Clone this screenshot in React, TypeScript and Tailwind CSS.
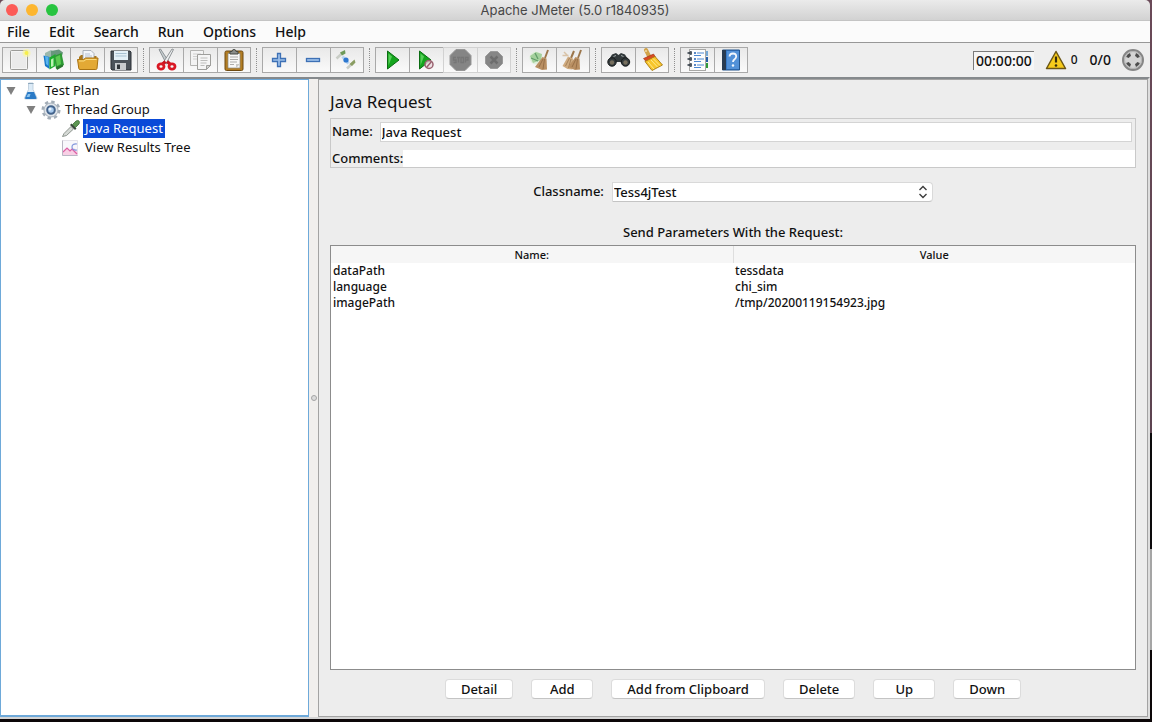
import type { ReactNode } from "react";
import clsx from "clsx";

type Tool = { label: string; icon: ReactNode; disabled?: boolean };

function Icon({ children }: { children: ReactNode }) {
  return (
    <svg viewBox="0 0 24 24" className="size-6 shrink-0" fill="none" aria-hidden="true">
      {children}
    </svg>
  );
}

const sparkle = (
  <>
    <circle cx="18.500" cy="5" r="4" fill="#fbf7a0" opacity=".7" />
    <circle cx="18.500" cy="5" r="2" fill="#f7ef4a" />
  </>
);

const newIcon = (
  <Icon>
    <rect x="2.5" y="2.5" width="17" height="19" rx="1" fill="#f4f4f3" stroke="#9c9c98" />
    <rect x="4" y="4" width="14" height="16" fill="#ebebea" />
    {sparkle}
  </Icon>
);

const templatesIcon = (
  <Icon>
    <path d="M3 5l6-3 4 2v12l-5 2-5-3z" fill="#9bb8ac" />
    <path d="M9 3l8-1.500 4 3-3 10-9 2z" fill="#68977c" />
    <path d="M1.500 7.500l6 1.500v12l-4.500-3z" fill="#1677c8" />
    <path d="M3 8l3.500 1v9L4 16z" fill="#58b4ee" />
    <path d="M7.500 9.500l6-3.500v12l-6 3.500z" fill="#1cae2c" />
    <path d="M12 8l7.500-3 2.500 12-8 4z" fill="#2e9a35" />
    <path d="M13.500 9l4.500-2 1 9-4 2z" fill="#5ccb50" />
    <path d="M9 11.500l2.500-1.500v8L9 19z" fill="#baf3b0" />
    <path d="M14 19l7-2.500v2L15 22z" fill="#26752b" />
  </Icon>
);

const openIcon = (
  <Icon>
    <path d="M3 9l2-2h3l1 1h11.500v8H3z" fill="#a9761c" />
    <path d="M7 2.500h8l3 3V14H7z" fill="#f2f5fa" stroke="#9aa2ad" strokeWidth=".8" />
    <path d="M9 6h5M9 8h7M9 10h7" stroke="#b5c1d4" />
    <path d="M1.500 11.500h6l2-1.500h12.500l-1 10.500q-.2 1-1.200 1H4q-1 0-1.200-1z" fill="#e3a935" stroke="#a97313" />
    <path d="M3 13h5l2-1.500h10.500" stroke="#f9dc83" />
  </Icon>
);

const saveIcon = (
  <Icon>
    <path d="M2 3h19l1 1v18H3l-1-1z" fill="#4b535b" stroke="#2c3137" />
    <rect x="5" y="3" width="14" height="9" fill="#e4f0f8" />
    <path d="M6.500 5.500h11M6.500 8h11" stroke="#a8c1d2" />
    <rect x="6" y="15" width="11" height="7" fill="#c8ccd0" />
    <rect x="8" y="16.500" width="3" height="4.500" fill="#30353a" />
  </Icon>
);

const cutIcon = (
  <Icon>
    <path d="M4 1.500l1.500-.5 8.500 13-2.500 2z" fill="#c6ced1" stroke="#83898c" strokeWidth=".9" />
    <path d="M18.500 1.500L17 1 8.500 14l2.500 2z" fill="#eef0f1" stroke="#83898c" strokeWidth=".9" />
    <path d="M10.500 13.500l-3 2.500M12 13.500l3 2.500" stroke="#c9141f" strokeWidth="3" />
    <ellipse cx="6" cy="18.500" rx="3" ry="2.600" stroke="#d91824" strokeWidth="2.800" />
    <ellipse cx="17" cy="18.500" rx="3" ry="2.600" stroke="#d91824" strokeWidth="2.800" />
  </Icon>
);

const copyIcon = (
  <Icon>
    <path d="M1.500 2.500h13v15h-13z" fill="#f3f3f3" stroke="#b4b4b2" />
    <path d="M4 6h8M4 8.500h4M4 11h4" stroke="#cfcfce" />
    <path d="M8.500 6.500h13v11l-4 4h-9z" fill="#f5f5f5" stroke="#9e9e9b" />
    <path d="M11.500 10h7M11.500 12.500h7M11.500 15h6M11.500 17.500h4" stroke="#bdbdbb" />
    <path d="M17.500 21.500v-4h4z" fill="#d3d3d1" stroke="#9e9e9b" />
  </Icon>
);

const pasteIcon = (
  <Icon>
    <rect x="3" y="3" width="18" height="19.500" rx="1.500" fill="#b27d23" stroke="#6f4a10" />
    <path d="M6 5.500h12v14.500H6z" fill="#f8f8f6" stroke="#8d8c85" strokeWidth=".7" />
    <path d="M8 9h8M8 11.500h8M8 14h7M8 16.500h4" stroke="#adadaa" />
    <path d="M14 20v-4h4z" fill="#c9c9c5" />
    <path d="M8 3.500h2q0-2 2-2t2 2h2V6H8z" fill="#8b8e8a" stroke="#454843" />
  </Icon>
);

const plusIcon = (
  <Icon>
    <path d="M9.500 5.500h3v5h5v3h-5v5h-3v-5h-5v-3h5z" fill="#9dc0ea" stroke="#3d70b5" strokeWidth="1.300" />
  </Icon>
);

const minusIcon = (
  <Icon>
    <rect x="4.500" y="10.500" width="13" height="3" fill="#9dc0ea" stroke="#3d70b5" strokeWidth="1.300" />
  </Icon>
);

const toggleIcon = (
  <Icon>
    <path d="M1.500 10.500L8 4.500" stroke="#c9cdc6" strokeWidth="2.500" />
    <path d="M5 4.500L10 2l.5 3.500-3.500 2z" fill="#6e9a58" />
    <path d="M12 20.500l6.500-6" stroke="#c9cdc6" strokeWidth="2.500" />
    <path d="M14.500 16L19.500 11.500l1 3-3.500 3.500z" fill="#8a9d62" />
    <path d="M7.500 8.500l6 7" stroke="#b5d3f2" strokeWidth="3" />
    <circle cx="11" cy="12" r="2.600" fill="#2e78cf" />
  </Icon>
);

const startIcon = (
  <Icon>
    <path d="M6.500 3L18 12 6.500 21z" fill="#14a51d" stroke="#0a6c12" />
    <path d="M7.500 5.500l3.500 3-3.500 9z" fill="#57cf59" />
  </Icon>
);

const startNoPauseIcon = (
  <Icon>
    <path d="M4.500 3L16 12 4.500 21z" fill="#14a51d" stroke="#0a6c12" />
    <path d="M5.500 5.500l3.500 3-3.500 9z" fill="#57cf59" />
    <circle cx="14" cy="16.500" r="4" fill="#ecdce0" fillOpacity=".8" stroke="#99616f" strokeWidth="1.500" />
    <path d="M11.500 19.500l5-6" stroke="#99616f" strokeWidth="1.500" />
  </Icon>
);

const stopIcon = (
  <Icon>
    <path d="M7 1.500h9l6 6v9l-6 6H7l-6-6v-9z" fill="#858585" stroke="#979797" />
    <path
      d="M7 9.500H4.500V12H7v2.500H4.500M8 9.500h3M9.500 9.500v5M12 9.500h2.500v5H12zM16.500 14.500v-5H19v2.500h-2.500"
      stroke="#767676"
      strokeWidth="1.300"
    />
  </Icon>
);

const shutdownIcon = (
  <Icon>
    <path d="M8.500 3.500h7l5 5v7l-5 5h-7l-5-5v-7z" fill="#868686" stroke="#9a9a9a" />
    <path d="M8.500 8.500l7 7M15.500 8.500l-7 7" stroke="#6d6d6d" strokeWidth="2.500" />
  </Icon>
);

const broom = (
  <>
    <path d="M20 2l-3 8" stroke="#9c764b" strokeWidth="2" />
    <path d="M14.500 9l4 1.500.5 11-5 .5-7-3z" fill="#b98f62" />
    <path d="M15 11l-4 8M16.500 11l-1.500 10" stroke="#8e6741" strokeWidth=".8" />
  </>
);

const clearIcon = (
  <Icon>
    <circle cx="8" cy="10" r="6.500" fill="#e0eedc" />
    <path d="M2 8l6-4 6 2-1 6-8 3z" fill="#a4d09c" />
    <path d="M3 10l7 3M7 5l3 6" stroke="#619d69" strokeWidth="1.300" />
    {broom}
  </Icon>
);

const clearAllIcon = (
  <Icon>
    <path d="M13 3l-3 7" stroke="#9c764b" strokeWidth="2" />
    <path d="M7 8.500l5 2-.5 11-5-.5-5-3z" fill="#cfab80" />
    <path d="M8.500 10l-4 8M10 11l-2.500 9" stroke="#9a764f" strokeWidth=".8" />
    <path d="M1.500 7.500h6M3 4l4 4" stroke="#d8c2a7" strokeWidth="1.500" />
    {broom}
  </Icon>
);

const searchIcon = (
  <Icon>
    <path d="M5 6.500l4-1.500 2.500 2L14 5l4 1.500 4 6.500-5 5-3.500-4h-4L6 18l-5-5z" fill="#31383a" />
    <circle cx="5" cy="14" r="4.200" fill="#333a3c" stroke="#171a1b" />
    <circle cx="18.500" cy="14" r="4.200" fill="#333a3c" stroke="#171a1b" />
    <circle cx="5" cy="14.500" r="2.200" fill="#776f5e" />
    <circle cx="18.500" cy="14.500" r="2.200" fill="#776f5e" />
    <path d="M6.500 8.500l2.500-1M14 7.500l2.500 1" stroke="#a2abac" />
  </Icon>
);

const resetIcon = (
  <Icon>
    <path d="M6 2l3 6" stroke="#d2a44c" strokeWidth="4" strokeLinecap="round" />
    <circle cx="6" cy="3" r="1" fill="#f1dda5" />
    <path d="M3.500 10.500l10-4.500 2 3-9 5z" fill="#d84a22" stroke="#9b2d12" strokeWidth=".6" />
    <path d="M5 13.500L15 8.500 22.500 17 12 22.500z" fill="#f7c52b" stroke="#a87911" strokeWidth=".9" />
    <path d="M8 14l6 7M11 12l6.500 7M13 10.500l7 7" stroke="#ffe98b" />
  </Icon>
);

const helperIcon = (
  <Icon>
    <rect x="3.500" y="1.500" width="16" height="21" fill="#fdfdfd" stroke="#a8a8a6" />
    <path d="M8 5h2M8 11h2M8 17h2" stroke="#2463b4" strokeWidth="1.500" />
    <path d="M11 5h7M11 11h7M11 17h7M8 7.500h7M8 13.500h7M8 19.500h7" stroke="#4c88d2" />
    <path d="M1.500 5h4M1.500 11h4M1.500 17h4" stroke="#27313b" strokeWidth="1.500" />
    <path d="M4 3.500h1.500v3H4zM4 9.500h1.500v3H4zM4 15.500h1.500v3H4z" stroke="#39424c" strokeWidth=".8" />
    <path d="M20 3h2v5h-2z" fill="#75a9d8" />
    <path d="M20 9h2v5h-2z" fill="#275ea8" />
    <path d="M20 15h2v5h-2z" fill="#2f9a39" />
  </Icon>
);

const helpIcon = (
  <Icon>
    <path d="M3.500 2h17v20h-17z" fill="#3679c7" stroke="#22548d" />
    <path d="M3 2h4v20H3z" fill="#293c52" />
    <path d="M8 3h12v18H8z" fill="#5291d8" />
    <path d="M10.500 8.500q.2-3 3.500-3t3.200 3q0 1.500-1.600 2.700T14 14" stroke="#f2f7fd" strokeWidth="1.800" />
    <circle cx="14" cy="17.500" r="1.200" fill="#f2f7fd" />
  </Icon>
);

const toolGroups: Tool[][] = [
  [
    { label: "New", icon: newIcon },
    { label: "Templates", icon: templatesIcon },
    { label: "Open", icon: openIcon },
    { label: "Save", icon: saveIcon },
  ],
  [
    { label: "Cut", icon: cutIcon },
    { label: "Copy", icon: copyIcon },
    { label: "Paste", icon: pasteIcon },
  ],
  [
    { label: "Expand All", icon: plusIcon },
    { label: "Collapse All", icon: minusIcon },
    { label: "Toggle", icon: toggleIcon },
  ],
  [
    { label: "Start", icon: startIcon },
    { label: "Start no pauses", icon: startNoPauseIcon },
    { label: "Stop", icon: stopIcon, disabled: true },
    { label: "Shutdown", icon: shutdownIcon, disabled: true },
  ],
  [
    { label: "Clear", icon: clearIcon },
    { label: "Clear All", icon: clearAllIcon },
  ],
  [
    { label: "Search", icon: searchIcon },
    { label: "Reset Search", icon: resetIcon },
  ],
  [
    { label: "Function Helper Dialog", icon: helperIcon },
    { label: "Help", icon: helpIcon },
  ],
];

const menus = ["File", "Edit", "Search", "Run", "Options", "Help"];

const flaskIcon = (
  <svg viewBox="0 0 20 20" className="size-5" fill="none" aria-hidden="true">
    <path d="M7.500 2h4.500v6.500l4 8.500q.3 1-1 1H4.500q-1.300 0-1-1l4-8.500z" fill="#dcebf7" stroke="#b5c8d8" strokeWidth=".8" />
    <path d="M6.500 11h6.500l2.500 6q0 1-1 1H5q-1 0-1-1z" fill="#2a7ac6" />
    <path d="M7 13h2.500l-1 3h-3z" fill="#8cc4ef" />
    <path d="M7 2.500h5.500" stroke="#8fa9bd" />
  </svg>
);

const gearIcon = (
  <svg viewBox="0 0 20 20" className="size-5" fill="none" aria-hidden="true">
    <circle cx="10" cy="10" r="8.200" stroke="#a3adb7" strokeWidth="2.600" strokeDasharray="3.400 3.040" />
    <circle cx="10" cy="10" r="7" fill="#dfe4e9" stroke="#a7b1bb" />
    <circle cx="10" cy="10" r="3.800" fill="#a9cbee" stroke="#44648c" strokeWidth="2" />
    <circle cx="9" cy="9" r="1.500" fill="#e9f4fe" />
  </svg>
);

const dropperIcon = (
  <svg viewBox="0 0 20 20" className="size-5" fill="none" aria-hidden="true">
    <path d="M1.500 17.500l1.500-3L10 7.500l2.500 2.500-7 6.500z" fill="#d5d9d5" stroke="#858c86" strokeWidth=".9" />
    <path d="M9 6l1.500-1.500 5 5L14 11z" fill="#3d4a3e" />
    <path d="M11.500 5.500L15 2q2-1.200 3 0t0 3l-3.500 3.500z" fill="#5d9652" stroke="#3f6c38" strokeWidth=".8" />
  </svg>
);

const graphIcon = (
  <svg viewBox="0 0 20 20" className="size-5" fill="none" aria-hidden="true">
    <path d="M1.500 2.500h15v15h-15z" fill="#f8f7fb" stroke="#dddbe3" strokeWidth=".8" />
    <path d="M2 14l4-4 3 3 4-3 3.500 4v3.500H2z" fill="#f8cfe5" />
    <path d="M2 14l4-4 3 3 2-2 5 5" stroke="#dd5fa4" strokeWidth="1.200" />
    <path d="M16 6q-5-.5-5 3t5 3" stroke="#8396dc" strokeWidth="1.200" />
    <path d="M1.500 2.500v15h15" stroke="#b9b6c4" />
  </svg>
);

const tree = [
  { name: "Test Plan", indent: "pl-1", icon: flaskIcon, open: true },
  { name: "Thread Group", indent: "pl-6", icon: gearIcon, open: true },
  { name: "Java Request", indent: "pl-11", icon: dropperIcon, selected: true },
  { name: "View Results Tree", indent: "pl-11", icon: graphIcon },
];

const params = [
  ["dataPath", "tessdata"],
  ["language", "chi_sim"],
  ["imagePath", "/tmp/20200119154923.jpg"],
];

function TitleBar() {
  return (
    <header className="relative flex h-[21px] shrink-0 items-center justify-center rounded-t-[5px] border-b border-[#c4c4c4] bg-linear-to-b from-[#ebebeb] to-[#d2d2d2]">
      <div className="absolute left-1.5 flex gap-2">
        <button aria-label="Close" className="size-3 rounded-full bg-[#fc5b57]" />
        <button aria-label="Minimize" className="size-3 rounded-full bg-[#fdb62f]" />
        <button aria-label="Zoom" className="size-3 rounded-full bg-[#28c440]" />
      </div>
      <h1 className="pt-px font-['Inter',sans-serif] text-[13px] font-normal text-[#474747]">
        Apache JMeter (5.0 r1840935)
      </h1>
    </header>
  );
}

function MenuBar() {
  return (
    <nav className="flex h-[22px] shrink-0 items-center gap-[19px] border-b border-[#979797] bg-[#fbfbfb] px-[7px] text-sm leading-5">
      {menus.map((m) => (
        <button key={m}>{m}</button>
      ))}
    </nav>
  );
}

function ToolBar() {
  return (
    <div className="flex h-[34px] shrink-0 items-center bg-[#eeeeee] pr-[5px] pl-0.5">
      {toolGroups.map((group, i) => (
        <div key={i} className="flex items-center">
          {i > 0 && (
            <div className="flex w-[11px] justify-center">
              <div className="h-6 border-l border-dotted border-[#8f8f8f]" />
            </div>
          )}
          {group.map((tool, j) => (
            <button
              key={tool.label}
              aria-label={tool.label}
              disabled={tool.disabled}
              className={clsx(
                "flex h-[26px] w-[34px] items-center justify-center border-y border-l bg-linear-to-b from-[#e9e9e9] to-[#fafafa]",
                tool.disabled ? "border-[#d2d2d2]" : "border-[#a9a9a9]",
                j === group.length - 1 && "border-r",
              )}
            >
              {tool.icon}
            </button>
          ))}
        </div>
      ))}
      <div className="ml-auto flex items-center text-sm leading-5">
        <span className="h-[19px] border-t border-l border-[#7b7b7b] bg-[#f6f6f6] px-0.5 leading-[17px]">00:00:00</span>
        <svg viewBox="0 0 22 20" className="ml-[11px] h-5 w-[22px]" fill="none" aria-hidden="true">
          <path d="M11 1.500L20.500 18.500h-19z" fill="#f7cb1b" stroke="#6b5616" strokeWidth="1.500" strokeLinejoin="round" />
          <path d="M11 6.500v6" stroke="#382d0c" strokeWidth="2.200" />
          <circle cx="11" cy="15.500" r="1.300" fill="#382d0c" />
        </svg>
        <span className="ml-1 text-xs">0</span>
        <span className="ml-3">0/0</span>
        <svg viewBox="0 0 24 24" className="ml-2.5 size-6" fill="none" aria-hidden="true">
          <circle cx="12" cy="12" r="10" fill="#d4d4d4" stroke="#868686" strokeWidth="2" />
          <circle cx="12" cy="12" r="8.500" stroke="#b3b3b3" />
          <path
            d="M6.500 9.500q.8-2.200 3-3M14.500 6.500q2.200.8 3 3M17.500 14.500q-.8 2.200-3 3M9.500 17.500q-2.200-.8-3-3"
            stroke="#4c4c4c"
            strokeWidth="3"
          />
        </svg>
      </div>
    </div>
  );
}

function TestTree() {
  return (
    <aside className="w-[309px] shrink-0 border border-b-2 border-[#6ea9d9] bg-white pt-px">
      <ul role="tree" className="text-[13px] font-normal">
        {tree.map((node) => (
          <li
            key={node.name}
            role="treeitem"
            aria-selected={!!node.selected}
            className={clsx("flex h-[19px] items-center", node.indent)}
          >
            <span className="mr-1 flex w-3 justify-center">
              {node.open && (
                <svg viewBox="0 0 10 8" className="h-2 w-2.5" aria-hidden="true">
                  <path d="M.5 0h9L5 8z" fill="#808080" />
                </svg>
              )}
            </span>
            {node.icon}
            <span className={clsx("ml-0.5 px-0.5 leading-[19px]", node.selected && "bg-[#0a4ad8] text-white")}>
              {node.name}
            </span>
          </li>
        ))}
      </ul>
    </aside>
  );
}

function ActionButton({ children }: { children: ReactNode }) {
  return (
    <button className="h-5 min-w-[62px] rounded-[4px] border border-[#dcdcdc] border-b-[#c4c4c4] bg-white px-[15px] leading-[18px]">
      {children}
    </button>
  );
}

function JavaRequestPanel() {
  return (
    <main className="flex min-w-0 grow flex-col border border-[#a3a3a3] bg-[#ededed] pt-[11px] pr-[11px] pb-[17px] pl-[11px] text-[13px]">
      <h2 className="text-[17px] leading-[22px] font-normal">Java Request</h2>
      <div className="mt-[5px] flex flex-col gap-2 border border-[#c9c9c9] pt-[3px]">
        <div className="flex h-5 items-center gap-[7px] pr-[3px] pl-px">
          <label htmlFor="name">Name:</label>
          <input
            id="name"
            defaultValue="Java Request"
            className="h-5 min-w-0 grow border border-[#d4d4d4] bg-white px-px"
          />
        </div>
        <div className="flex h-[17px] items-center pl-px">
          <label htmlFor="comments">Comments:</label>
          <input id="comments" className="h-[17px] min-w-0 grow bg-white px-0.5" />
        </div>
      </div>
      <div className="mt-3.5 flex h-5 items-center justify-center gap-2">
        <label htmlFor="classname">Classname:</label>
        <div className="relative h-5 w-[321px]">
          <select
            id="classname"
            className="h-5 w-full appearance-none rounded-r-[4px] border border-[#d9d9d9] border-b-[#c4c4c4] bg-white px-px leading-[18px]"
          >
            <option>Tess4jTest</option>
          </select>
          <svg viewBox="0 0 10 14" className="pointer-events-none absolute top-[3px] right-[5px] h-3.5 w-2.5" fill="none" aria-hidden="true">
            <path d="M1.500 5L5 1.500 8.500 5M1.500 9L5 12.500 8.500 9" stroke="#3c3c3c" strokeWidth="1.400" />
          </svg>
        </div>
      </div>
      <h3 className="mt-5 text-center leading-5">Send Parameters With the Request:</h3>
      <div className="mt-[3px] grow border border-[#8c8c8c] bg-white">
        <table className="w-full table-fixed border-collapse">
          <thead className="bg-[#f6f6f6] text-[11px]">
            <tr className="h-[17px]">
              <th className="border-r border-[#dedede] p-0 leading-4 font-medium">Name:</th>
              <th className="p-0 leading-4 font-medium">Value</th>
            </tr>
          </thead>
          <tbody className="text-xs">
            {params.map(([name, value]) => (
              <tr key={name} className="h-4">
                <td className="p-0 pl-0.5 leading-4">{name}</td>
                <td className="p-0 pl-0.5 leading-4">{value}</td>
              </tr>
            ))}
          </tbody>
        </table>
      </div>
      <div className="mt-[9px] flex justify-center gap-[18px]">
        <ActionButton>Detail</ActionButton>
        <ActionButton>Add</ActionButton>
        <ActionButton>Add from Clipboard</ActionButton>
        <ActionButton>Delete</ActionButton>
        <ActionButton>Up</ActionButton>
        <ActionButton>Down</ActionButton>
      </div>
    </main>
  );
}

export default function App() {
  return (
    <div className="flex h-screen flex-col bg-[linear-gradient(#6a4a58_0%,#5c4350_60%,#0c0a0c_60%,#0c0a0c_76%,#a5a5a5_76%,#a5a5a5_90%,#0c0608_90%)] pr-0.5 pb-[3px] font-['Noto_Sans',sans-serif] font-medium text-[#111111]">
      <TitleBar />
      <MenuBar />
      <ToolBar />
      <div className="flex min-h-0 grow border-t-2 border-r-2 border-b-2 border-t-[#85898c] border-r-[#dedede] border-b-[#d4d4d4] bg-[#f0eeec]">
        <TestTree />
        <div className="flex w-[9px] shrink-0 items-center justify-center bg-[#f1efed]">
          <span className="size-1.5 rounded-full border border-[#a5a5a5] bg-[#dcdcdc]" />
        </div>
        <JavaRequestPanel />
      </div>
    </div>
  );
}
